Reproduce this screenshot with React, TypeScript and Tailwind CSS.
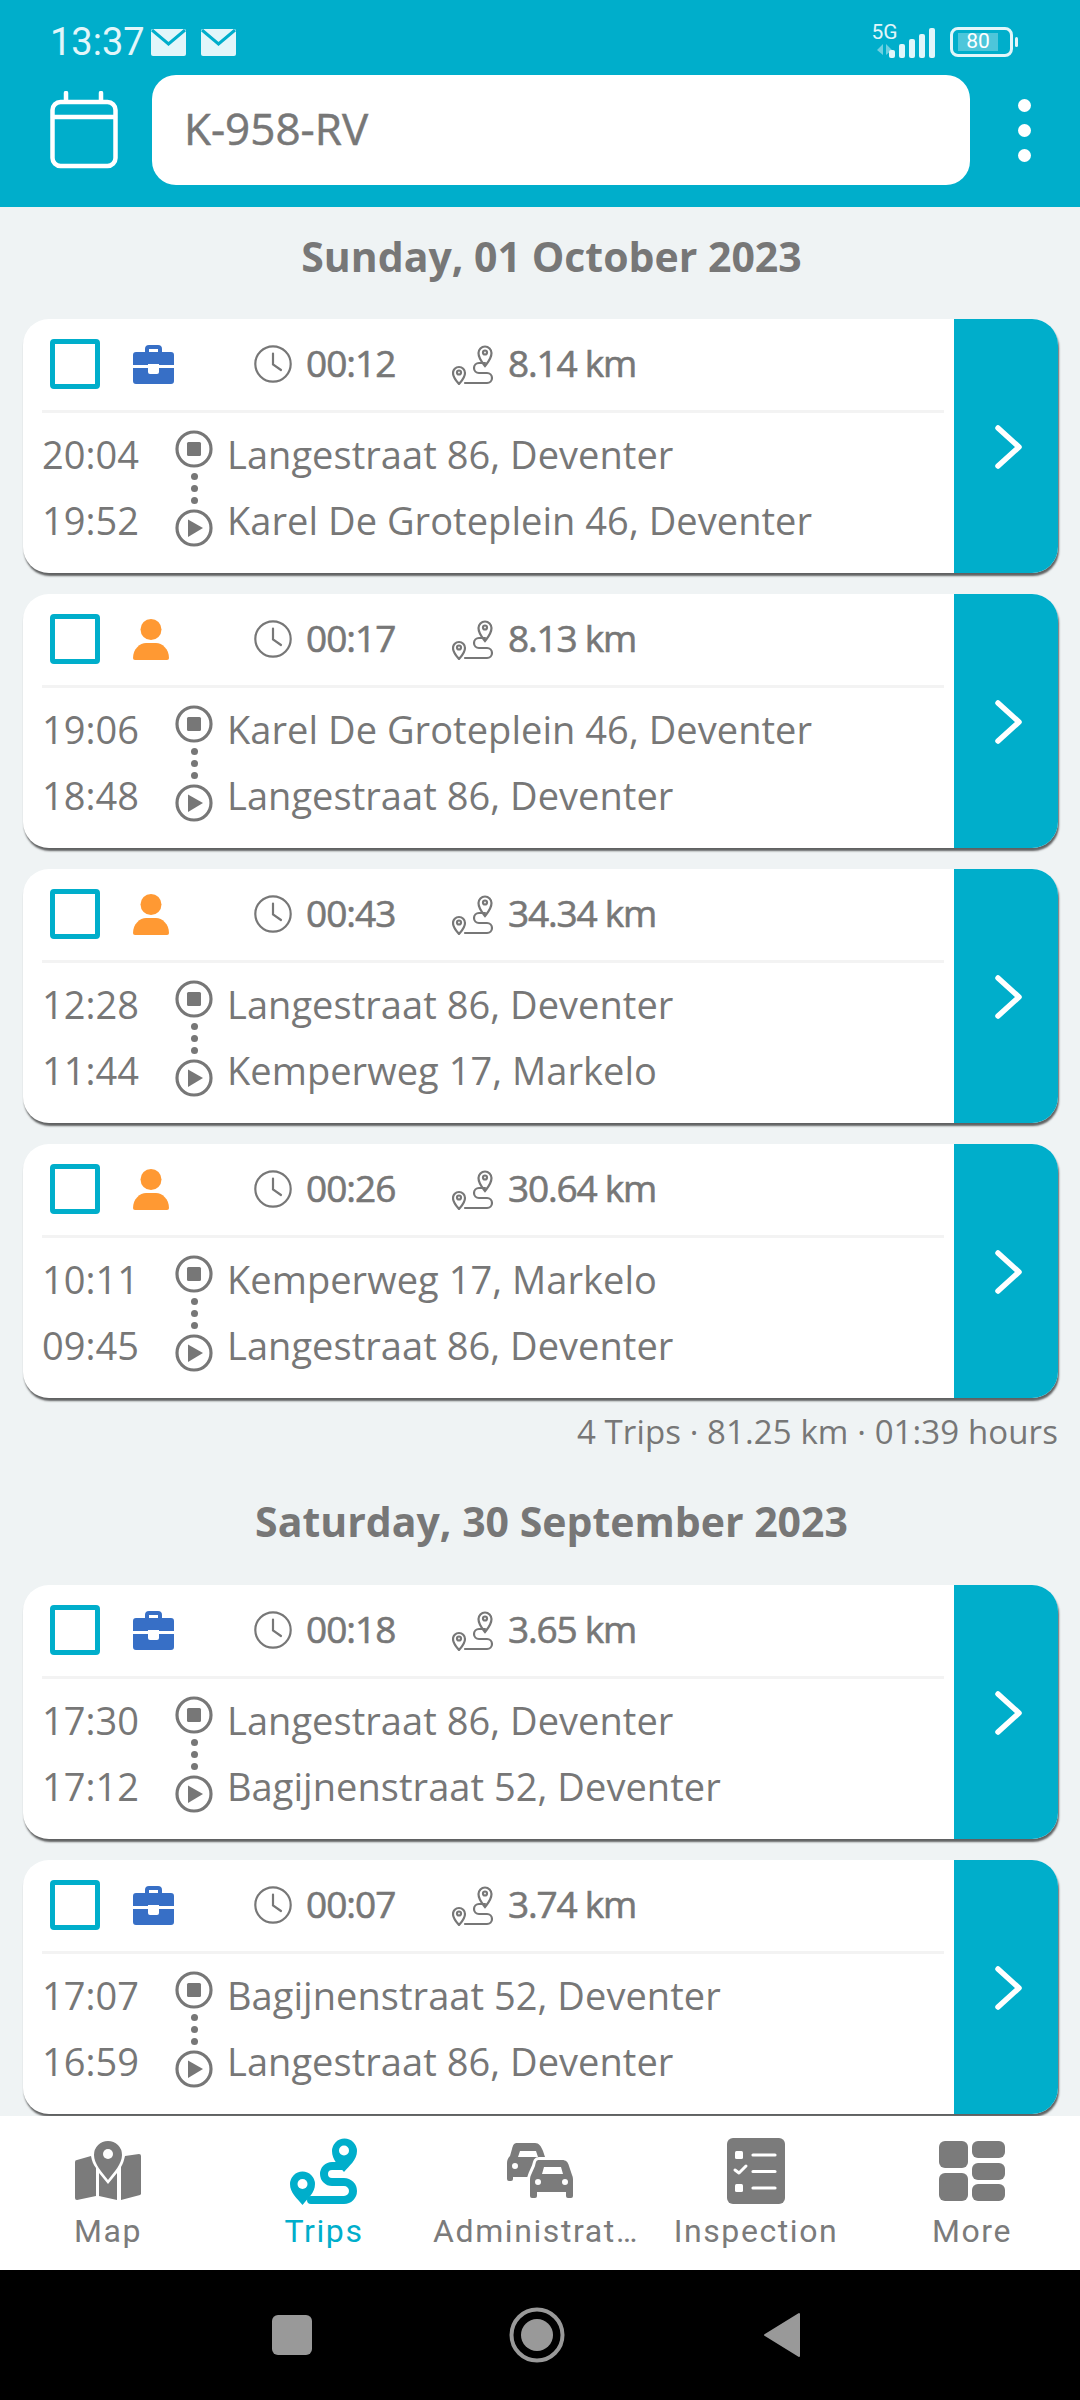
import React from 'react';

type Trip = {
  kind: 'work' | 'private';
  duration: string;
  distance: string;
  endTime: string;
  endPlace: string;
  startTime: string;
  startPlace: string;
};

const LANGE = 'Langestraat 86, Deventer';
const KAREL = 'Karel De Groteplein 46, Deventer';
const KEMPER = 'Kemperweg 17, Markelo';
const BAGIJN = 'Bagijnenstraat 52, Deventer';

const oct: Trip[] = [
  { kind: 'work', duration: '00:12', distance: '8.14 km', endTime: '20:04', endPlace: LANGE, startTime: '19:52', startPlace: KAREL },
  { kind: 'private', duration: '00:17', distance: '8.13 km', endTime: '19:06', endPlace: KAREL, startTime: '18:48', startPlace: LANGE },
  { kind: 'private', duration: '00:43', distance: '34.34 km', endTime: '12:28', endPlace: LANGE, startTime: '11:44', startPlace: KEMPER },
  { kind: 'private', duration: '00:26', distance: '30.64 km', endTime: '10:11', endPlace: KEMPER, startTime: '09:45', startPlace: LANGE },
];

const sep: Trip[] = [
  { kind: 'work', duration: '00:18', distance: '3.65 km', endTime: '17:30', endPlace: LANGE, startTime: '17:12', startPlace: BAGIJN },
  { kind: 'work', duration: '00:07', distance: '3.74 km', endTime: '17:07', endPlace: BAGIJN, startTime: '16:59', startPlace: LANGE },
];

const Briefcase = () => (
  <svg width="41" height="39" viewBox="0 0 41 39" className="block">
    <path d="M12 8V4a4 4 0 0 1 4-4h9a4 4 0 0 1 4 4v4h-4V4h-9v4z" fill="#376fc6" />
    <path d="M3 7h35a3 3 0 0 1 3 3v10H26v-1H15v1H0V10a3 3 0 0 1 3-3z" fill="#376fc6" />
    <path d="M0 23h15v4a2 2 0 0 0 2 2h7a2 2 0 0 0 2-2v-4h15v13a3 3 0 0 1-3 3H3a3 3 0 0 1-3-3z" fill="#376fc6" />
  </svg>
);

const Person = () => (
  <svg width="36" height="41" viewBox="0 0 36 41" className="block">
    <circle cx="18" cy="10.500" r="10.500" fill="#ff9933" />
    <path d="M2 41a2 2 0 0 1-2-2c0-9 7-15 13-15h10c6 0 13 6 13 15a2 2 0 0 1-2 2z" fill="#ff9933" />
  </svg>
);

const Clock = () => (
  <svg width="38" height="38" viewBox="0 0 38 38" fill="none" stroke="#777777" strokeWidth="2.200" strokeLinecap="round" className="block">
    <circle cx="19" cy="19" r="17.700" />
    <path d="M19 8.500V19.500L27 25" />
  </svg>
);

const RouteSmall = () => (
  <svg width="42" height="42" viewBox="0 0 42 42" fill="none" stroke="#777777" strokeWidth="2.200" className="block">
    <path d="M33 23c-3-4-6.500-7.500-6.500-13a6.500 6.500 0 0 1 13 0c0 5.500-3.500 9-6.500 13z" />
    <circle cx="33" cy="9.500" r="2" />
    <path d="M7 41c-3-3.500-6-6.500-6-11a6 6 0 0 1 12 0c0 4.500-3 7.500-6 11z" />
    <circle cx="7" cy="29.500" r="2" />
    <path d="M33 20H27a5 5 0 0 0 0 10H35a5 5 0 0 1 0 10H13" strokeLinecap="round" />
  </svg>
);

const StopIcon = () => (
  <svg width="38" height="38" viewBox="0 0 38 38" className="block">
    <circle cx="19" cy="19" r="17" fill="none" stroke="#777777" strokeWidth="3.200" />
    <rect x="12" y="12" width="14" height="14" rx="1.500" fill="#777777" />
  </svg>
);

const PlayIcon = () => (
  <svg width="38" height="38" viewBox="0 0 38 38" className="block">
    <circle cx="19" cy="19" r="17" fill="none" stroke="#777777" strokeWidth="3.200" />
    <path d="M13 10.500 28 19 13 28z" fill="#777777" strokeLinejoin="round" />
  </svg>
);

const Chevron = () => (
  <svg width="30" height="46" viewBox="0 0 30 46" fill="none" stroke="#ffffff" strokeWidth="5.500" strokeLinecap="round" strokeLinejoin="round" className="block">
    <path d="M4 4 25 23 4 42" />
  </svg>
);

const TripCard = ({ trip }: { trip: Trip }) => (
  <div className="flex h-[254px] w-[1035px] overflow-hidden rounded-[26px] bg-white shadow-[1px_3px_2px_rgba(0,0,0,0.6)]">
    <div className="flex-1 min-w-0">
      <div className="flex h-[91px] items-center pb-[1px] pl-[27px]">
        <div className="h-[50px] w-[50px] rounded-[4px] border-[5px] border-[#00aecb]" />
        <div className="w-[154px] pl-[33px]">
          {trip.kind === 'work' ? <Briefcase /> : <Person />}
        </div>
        <Clock />
        <div className="ml-[14px] w-[146px] pb-[2px] font-['Open_Sans'] text-[37px] tracking-[-1px] text-[#777777] [-webkit-text-stroke:0.6px_#777777]">{trip.duration}</div>
        <RouteSmall />
        <div className="ml-[14px] pb-[2px] font-['Open_Sans'] text-[37px] tracking-[-1.200px] text-[#777777] [-webkit-text-stroke:0.6px_#777777]">{trip.distance}</div>
      </div>
      <div className="ml-[19px] mr-[10px] h-[3px] bg-[#f3f3f3]" />
      <div className="flex pl-[19px] pt-[8px] font-['Open_Sans'] text-[38px] leading-[66px] text-[#777777]">
        <div className="w-[133px]">
          <div>{trip.endTime}</div>
          <div>{trip.startTime}</div>
        </div>
        <div className="flex w-[38px] flex-col items-center pt-[9px]">
          <StopIcon />
          <div className="mt-[5px] h-[7px] w-[7px] rounded-full bg-[#777777]" />
          <div className="mt-[5px] h-[7px] w-[7px] rounded-full bg-[#777777]" />
          <div className="mt-[5px] h-[7px] w-[7px] rounded-full bg-[#777777]" />
          <div className="mt-[5px]">
            <PlayIcon />
          </div>
        </div>
        <div className="pl-[14px] tracking-[0.050px]">
          <div>{trip.endPlace}</div>
          <div>{trip.startPlace}</div>
        </div>
      </div>
    </div>
    <div className="flex w-[104px] shrink-0 justify-center bg-[#00aecb] pt-[105px] pl-[6px]">
      <Chevron />
    </div>
  </div>
);

const NavMap = ({ color }: { color: string }) => (
  <svg width="66" height="60" viewBox="0 0 66 60" className="block">
    <path d="M33 0a14 14 0 0 1 14 14c0 9-8 17-14 25-6-8-14-16-14-25A14 14 0 0 1 33 0z" fill={color} />
    <circle cx="33" cy="13" r="5" fill="#ffffff" />
    <path d="M2 19l14-4c1 5 2 8 5 12V55L2 59a2 2 0 0 1-2-2V21a2 2 0 0 1 2-2z" fill={color} />
    <path d="M24 32 33 43 42 32V59L24 55z" fill={color} />
    <path d="M50 15l14-2a2 2 0 0 1 2 2V53a2 2 0 0 1-1 1L46 59V26c2-3 3-7 4-11z" fill={color} />
  </svg>
);

const NavTrips = ({ color }: { color: string }) => (
  <svg width="68" height="67" viewBox="0 0 68 67" className="block">
    <path d="M54 34c-5-6-12-12-12-21a12.500 12.500 0 0 1 25 0c0 9-8 15-13 21z" fill={color} />
    <circle cx="54" cy="12.500" r="5" fill="#ffffff" />
    <path d="M12.500 67C7 60 0 55 0 46a12.500 12.500 0 0 1 25 0c0 9-7 14-12.500 21z" fill={color} />
    <circle cx="12.500" cy="46" r="5" fill="#ffffff" />
    <path d="M52 28H42a8 8 0 0 0 0 16H54a9 9 0 0 1 0 18H21" fill="none" stroke={color} strokeWidth="8" strokeLinecap="round" />
  </svg>
);

const NavCars = ({ color }: { color: string }) => (
  <svg width="66" height="56" viewBox="0 0 66 56" className="block">
    <path d="M10 0H28C32 0 34 3 36 8L38 14V34H6V36a2 2 0 0 1-2 2H2a2 2 0 0 1-2-2V20C0 17 1 15 3 13L5 6C6 2 7 0 10 0zM13 8 11 14H31L29 8zM8 20a3 3 0 1 0 0 6 3 3 0 0 0 0-6z" fill={color} fillRule="evenodd" />
    <path d="M32 17H55C59 17 61 19 62 23L65 32C66 34 66 36 66 38V53a2 2 0 0 1-2 2H61a2 2 0 0 1-2-2V49H30V53a2 2 0 0 1-2 2H25a2 2 0 0 1-2-2V38C23 36 23 34 24 32L28 23C29 19 29 17 32 17zM37 24 35 31H56L54 24zM31 36a3 3 0 1 0 0 6 3 3 0 0 0 0-6zM58 36a3 3 0 1 0 0 6 3 3 0 0 0 0-6z" fill={color} fillRule="evenodd" stroke="#ffffff" strokeWidth="6" paintOrder="stroke" />
  </svg>
);

const NavInspection = ({ color }: { color: string }) => (
  <svg width="58" height="66" viewBox="0 0 58 66" className="block">
    <rect width="58" height="66" rx="6" fill={color} />
    <rect x="8" y="13" width="8" height="8" rx="1.500" fill="#ffffff" />
    <rect x="8" y="46" width="8" height="8" rx="1.500" fill="#ffffff" />
    <path d="M8 32l4 3 7-7" fill="none" stroke="#ffffff" strokeWidth="3" strokeLinecap="round" strokeLinejoin="round" />
    <path d="M26 17H48M26 33.500H48M26 50H48" stroke="#ffffff" strokeWidth="3.200" strokeLinecap="round" />
  </svg>
);

const NavMore = ({ color }: { color: string }) => (
  <svg width="66" height="60" viewBox="0 0 66 60" className="block">
    <rect width="29" height="27" rx="6" fill={color} />
    <rect y="32" width="29" height="28" rx="6" fill={color} />
    <rect x="33" width="33" height="17" rx="6" fill={color} />
    <rect x="33" y="22" width="33" height="17" rx="6" fill={color} />
    <rect x="33" y="43" width="33" height="17" rx="6" fill={color} />
  </svg>
);

const NavItem = ({ label, active, labelClass, children }: { label: string; active?: boolean; labelClass?: string; children: React.ReactNode }) => (
  <div className={`flex min-w-0 flex-1 flex-col items-center ${active ? 'text-[#00aecb]' : 'text-[#7b7b7b]'}`}>
    <div className="flex h-[66px] items-center">{children}</div>
    <div className={`mt-[3px] font-['Roboto'] text-[32px] leading-[48px] tracking-[1.600px] whitespace-nowrap ${labelClass ?? ''}`}>{label}</div>
  </div>
);

export default function App() {
  const grey = '#7b7b7b';
  return (
    <div className="flex h-[2400px] w-[1080px] flex-col overflow-hidden bg-[#eff3f4]">
      <header className="h-[207px] shrink-0 bg-[#00aecb]">
        <div className="flex h-[75px] items-start pl-[50px] pr-[62px] pt-[20px] text-[#e2f6fa]">
          <span className="font-['Roboto'] text-[38px] leading-[44px]">13:37</span>
          <svg width="35" height="27" viewBox="0 0 35 27" className="ml-[6px] mt-[9px] block">
            <rect width="35" height="27" rx="2" fill="#e2f6fa" />
            <path d="M1 1 17.500 15 34 1" fill="none" stroke="#00aecb" strokeWidth="3" />
          </svg>
          <svg width="35" height="27" viewBox="0 0 35 27" className="ml-[15px] mt-[9px] block">
            <rect width="35" height="27" rx="2" fill="#e2f6fa" />
            <path d="M1 1 17.500 15 34 1" fill="none" stroke="#00aecb" strokeWidth="3" />
          </svg>
          <div className="ml-auto flex items-start">
            <div className="flex w-[27px] flex-col items-center">
              <span className="font-['Roboto'] text-[21px] leading-[24px]">5G</span>
              <svg width="16" height="12" viewBox="0 0 16 12" className="block">
                <path d="M6 0V11L0 6zM9 0V11L15 6z" fill="#6fd0e0" />
              </svg>
            </div>
            <svg width="47" height="30" viewBox="0 0 47 30" className="-ml-[9px] mt-[8px] block">
              <rect x="0" y="22" width="6" height="8" rx="2" fill="#e2f6fa" />
              <rect x="10" y="16" width="6" height="14" rx="2" fill="#e2f6fa" />
              <rect x="20" y="11" width="6" height="19" rx="2" fill="#e2f6fa" />
              <rect x="30" y="6" width="6" height="24" rx="2" fill="#e2f6fa" />
              <rect x="40" y="0" width="6" height="30" rx="2" fill="#e2f6fa" />
            </svg>
            <div className="ml-[14px] mt-[7px] flex h-[30px] w-[63px] items-center rounded-[8px] border-[3px] border-[#e2f6fa] pl-[5px]">
              <div className="flex h-[18px] w-[40px] items-center justify-center bg-[#4dc6da] font-['Roboto'] text-[21px] text-white">80</div>
            </div>
            <div className="ml-[2px] mt-[17px] h-[10px] w-[3px] rounded-[2px] bg-[#e2f6fa]" />
          </div>
        </div>
        <div className="flex items-center pl-[50px]">
          <svg width="68" height="78" viewBox="0 0 68 78" fill="none" stroke="#ffffff" strokeWidth="4.500" strokeLinecap="round" className="block">
            <rect x="2.500" y="11" width="63" height="64" rx="8" />
            <path d="M16 2V10M51 2V10" />
            <path d="M3 26H65" />
          </svg>
          <div className="ml-[34px] flex h-[110px] w-[818px] items-center rounded-[24px] bg-white pb-[4px] pl-[32px] font-['Open_Sans'] text-[44px] text-[#777777] [-webkit-text-stroke:0.5px_#777777]">K-958-RV</div>
          <div className="ml-[48px] flex flex-col gap-[12px]">
            <div className="h-[13px] w-[13px] rounded-full bg-white" />
            <div className="h-[13px] w-[13px] rounded-full bg-white" />
            <div className="h-[13px] w-[13px] rounded-full bg-white" />
          </div>
        </div>
      </header>

      <main className="min-h-0 flex-1 overflow-hidden pl-[23px]">
        <h2 className="h-[112px] pt-[22px] text-center font-['Open_Sans'] text-[41px] leading-[54px] font-bold text-[#777777]">Sunday, 01 October 2023</h2>
        <div className="flex flex-col gap-[21px]">
          {oct.map((t) => (
            <TripCard key={t.endTime} trip={t} />
          ))}
        </div>
        <div className="w-[1035px] text-right font-['Open_Sans'] text-[33px] leading-[68px] tracking-[0.100px] text-[#777777]">4 Trips · 81.25 km · 01:39 hours</div>
        <h2 className="h-[119px] pt-[28px] text-center font-['Open_Sans'] text-[41px] leading-[54px] font-bold text-[#777777]">Saturday, 30 September 2023</h2>
        <div className="flex flex-col gap-[21px]">
          {sep.map((t) => (
            <TripCard key={t.endTime} trip={t} />
          ))}
        </div>
      </main>

      <nav className="flex h-[154px] shrink-0 bg-white pt-[22px]">
        <NavItem label="Map"><NavMap color={grey} /></NavItem>
        <NavItem label="Trips" active><NavTrips color="#00aecb" /></NavItem>
        <NavItem label="Administrat…" labelClass="pr-[8px]"><NavCars color={grey} /></NavItem>
        <NavItem label="Inspection"><NavInspection color={grey} /></NavItem>
        <NavItem label="More"><NavMore color={grey} /></NavItem>
      </nav>

      <div className="flex h-[130px] shrink-0 items-center bg-black">
        <div className="ml-[272px] h-[40px] w-[40px] rounded-[6px] bg-[#999999]" />
        <svg width="56" height="56" viewBox="0 0 56 56" className="ml-[197px] block">
          <circle cx="28" cy="28" r="25.500" fill="none" stroke="#999999" strokeWidth="4" />
          <circle cx="28" cy="28" r="16" fill="#999999" />
        </svg>
        <svg width="38" height="46" viewBox="0 0 38 46" className="ml-[198px] block">
          <path d="M36 2V44L2 23z" fill="#999999" stroke="#999999" strokeWidth="2" strokeLinejoin="round" />
        </svg>
      </div>
    </div>
  );
}
